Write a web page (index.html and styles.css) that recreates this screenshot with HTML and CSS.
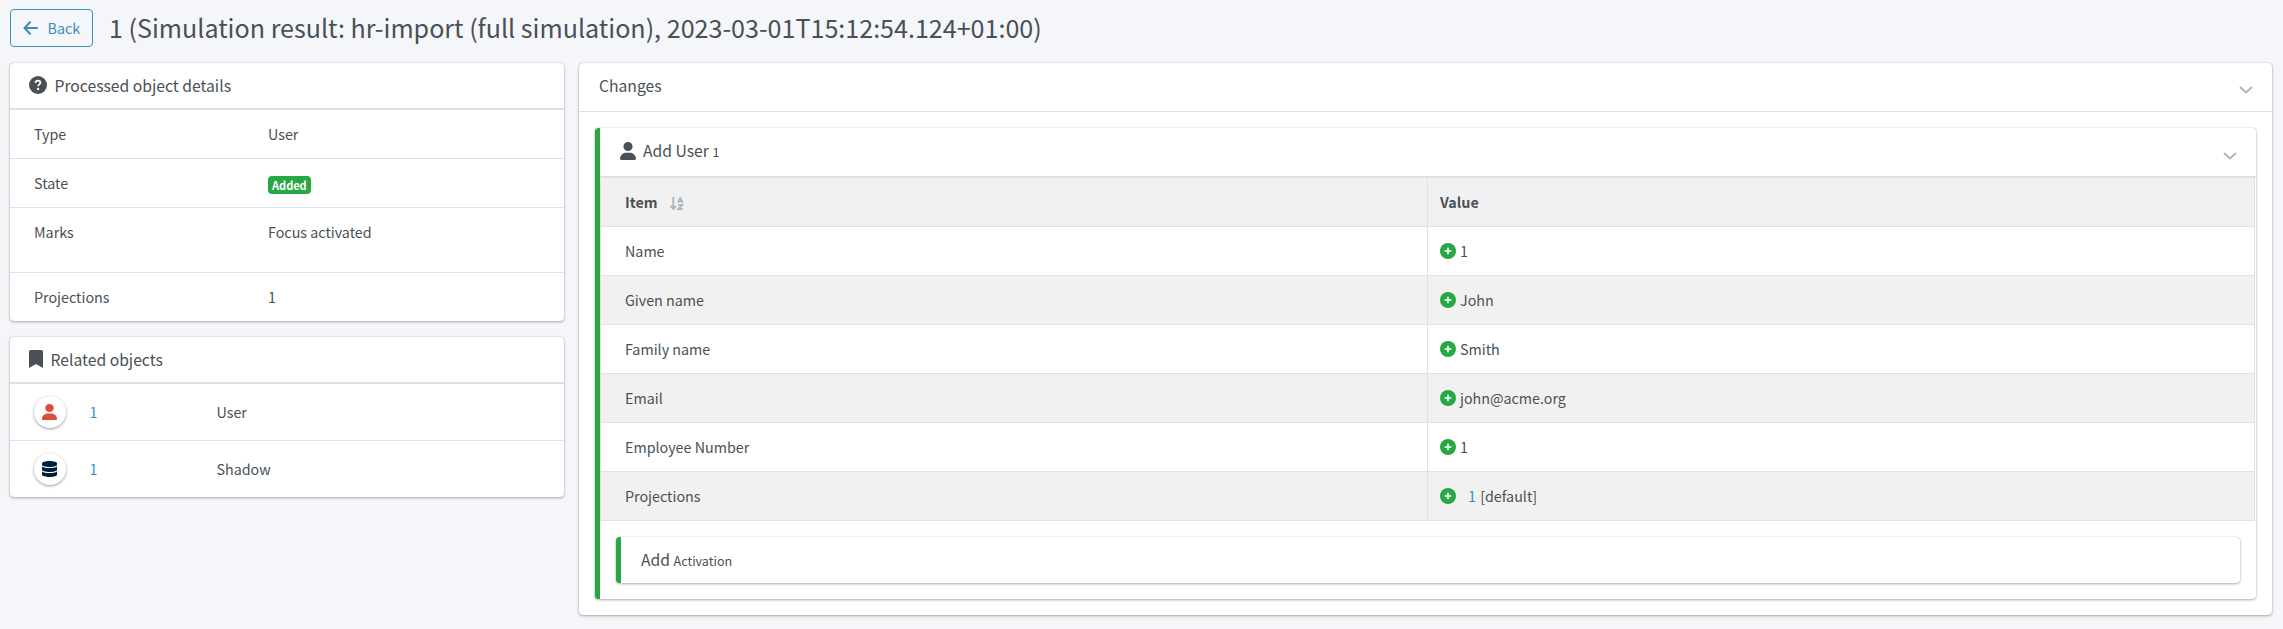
FILE: index.html
```html
<!DOCTYPE html>
<html lang="en">
<head>
<meta charset="utf-8">
<title>Simulation result</title>
<link rel="stylesheet" href="styles.css">
</head>
<body>
<svg class="defs" width="0" height="0">
  <symbol id="user" viewBox="0 0 448 512" preserveAspectRatio="none"><path d="M224 256c70.700 0 128-57.300 128-128S294.700 0 224 0 96 57.300 96 128s57.300 128 128 128zm50 48H174C78 304 0 382 0 478c0 19 15 34 34 34h380c19 0 34-15 34-34 0-96-78-174-174-174z"/></symbol>
  <symbol id="plus" viewBox="0 0 512 512"><circle cx="256" cy="256" r="256"/><path d="M256 166v180M166 256h180" stroke="#fff" stroke-width="50" stroke-linecap="round"/></symbol>
  <symbol id="chevron" viewBox="0 0 14 8"><path d="M1 1l6 5.500L13 1" fill="none" stroke="#adb5bd" stroke-width="2"/></symbol>
</svg>
<header class="page-head">
  <a class="back"><svg width="15" height="14" viewBox="0 0 15 14"><path d="M7 1.200L1.500 7 7 12.800M1.800 7h12.200" fill="none" stroke="currentColor" stroke-width="2" stroke-linecap="round" stroke-linejoin="round"/></svg><span>Back</span></a>
  <h1>1 (Simulation result: hr-import (full simulation), 2023-03-01T15:12:54.124+01:00)</h1>
</header>
<main class="columns">
  <div class="side">
    <section class="card">
      <h3 class="card-head strong"><svg class="i-help" width="18" height="18" viewBox="0 0 18 18"><circle cx="9" cy="9" r="9" fill="#495057"/><path d="M6.500 7C6.700 5.300 7.700 4.700 9 4.700c1.400 0 2.400.8 2.400 2 0 1.700-2.200 1.700-2.200 3.500" fill="none" stroke="#fff" stroke-width="1.800"/><circle cx="9.100" cy="12.900" r="1.200" fill="#fff"/></svg>Processed object details</h3>
      <dl class="details">
        <div><dt>Type</dt><dd>User</dd></div>
        <div><dt>State</dt><dd><span class="badge">Added</span></dd></div>
        <div class="tall"><dt>Marks</dt><dd>Focus activated</dd></div>
        <div><dt>Projections</dt><dd>1</dd></div>
      </dl>
    </section>
    <section class="card">
      <h3 class="card-head strong"><svg class="i-mark" width="14" height="18" viewBox="0 0 14 18"><path d="M0 18V1.700C0 .8.800 0 1.700 0h10.600c.900 0 1.700.8 1.700 1.700V18l-7-4z" fill="#495057"/></svg>Related objects</h3>
      <ul class="related">
        <li><span class="round red"><svg width="15" height="16"><use href="#user"/></svg></span><a>1</a><span>User</span></li>
        <li><span class="round navy"><svg width="15" height="16" viewBox="0 0 448 512" preserveAspectRatio="none"><path d="M448 73v46c0 40-100 73-224 73S0 159 0 119V73C0 33 100 0 224 0s224 33 224 73zM448 176v103c0 40-100 73-224 73S0 319 0 279V176c48 33 136 49 224 49s176-16 224-49zm0 160v103c0 40-100 73-224 73S0 479 0 439V336c48 33 136 49 224 49s176-16 224-49z"/></svg></span><a>1</a><span>Shadow</span></li>
      </ul>
    </section>
  </div>
  <section class="card changes">
    <h3 class="card-head">Changes<svg class="chev" width="14" height="8"><use href="#chevron"/></svg></h3>
    <div class="changes-body">
      <section class="card added">
        <h3 class="card-head strong"><svg class="i-user" width="16" height="18"><use href="#user"/></svg><span>Add User <small>1</small></span><svg class="chev" width="14" height="8"><use href="#chevron"/></svg></h3>
        <table class="delta">
          <thead><tr><th>Item<svg class="sort" width="14" height="13" viewBox="0 0 14 13" fill="none" stroke="#adb5bd"><path d="M3.300 0v11.500M.5 8.800l2.800 3 2.800-3" stroke-width="1.900"/><path d="M8 5.700L10.300.8l2.300 4.900M8.800 4.300h3" stroke-width="1.900"/><path d="M8 7.900h4.300L8.200 12h4.500" stroke-width="1.900"/></svg></th><th>Value</th></tr></thead>
          <tbody>
            <tr><td>Name</td><td><svg class="plus"><use href="#plus"/></svg>1</td></tr>
            <tr><td>Given name</td><td><svg class="plus"><use href="#plus"/></svg>John</td></tr>
            <tr><td>Family name</td><td><svg class="plus"><use href="#plus"/></svg>Smith</td></tr>
            <tr><td>Email</td><td><svg class="plus"><use href="#plus"/></svg>john@acme.org</td></tr>
            <tr><td>Employee Number</td><td><svg class="plus"><use href="#plus"/></svg>1</td></tr>
            <tr><td>Projections</td><td><svg class="plus"><use href="#plus"/></svg><a class="proj">1</a> [default]</td></tr>
          </tbody>
        </table>
        <section class="card activation"><span>Add <small>Activation</small></span></section>
      </section>
    </div>
  </section>
</main>
</body>
</html>
```
FILE: styles.css
```css
* { box-sizing: border-box; }
body {
  margin: 0;
  padding: 9px 11px 0 10px;
  height: 629px;
  overflow: hidden;
  background: #f4f6f9;
  color: #495057;
  font: 14.3px/24px "Noto Sans CJK SC", "Noto Sans", sans-serif;
}
.defs { position: absolute; }
h1, h3, dl, dd, ul { margin: 0; padding: 0; font-weight: 400; }
a { color: #3c8dbc; }
svg { flex: none; }
small { font-size: 80%; }
.page-head { display: flex; height: 38px; align-items: center; }
.back {
  display: flex;
  align-items: center;
  gap: 10px;
  width: 83px;
  height: 38px;
  padding: 0 0 1px 11.500px;
  border: 1px solid #3c8dbc;
  border-radius: 4px;
}
h1 { margin-left: 16px; font-size: 25.080px; line-height: 36px; height: 38px; white-space: nowrap; }
.columns { display: flex; gap: 15px; margin-top: 16px; align-items: flex-start; }
.side { display: flex; flex-direction: column; gap: 16px; width: 554px; }
.card {
  background: #fff;
  border-radius: 4px;
  box-shadow: 0 0 1px rgba(0,0,0,.3), 0 1px 3px rgba(0,0,0,.3);
}
.card-head {
  display: flex;
  align-items: center;
  height: 49px;
  padding: 0 19px 2px 20px;
  border-bottom: 1px solid #dee0e2;
  font-size: 15.700px;
}
.card-head.strong { height: 47px; padding: 0 19px 0 19px; border-bottom: 2px solid #dee0e2; }
.i-help, .i-mark, .i-user { margin-right: 7.500px; fill: #495057; }
.i-help, .i-mark { margin-top: -1px; }
.i-user { margin: -2px 7px 0 1px; }
.chev { margin: 8px 0 0 auto; }
.details > div { display: flex; height: 49px; padding: 12px 24px 0; border-bottom: 1px solid #dee2e6; }
.details > div.tall { height: 65px; }
.details > div:last-child { height: 48px; border: 0; }
dt { width: 234px; }
.badge {
  display: block;
  height: 18px;
  margin-top: 5px;
  padding: 0 4px;
  border-radius: 4px;
  background: #28a745;
  color: #fff;
  font-size: 11px;
  font-weight: 700;
  line-height: 18px;
}
.related { list-style: none; }
.related li { display: grid; grid-template-columns: 55.500px 127px auto; align-items: center; height: 57px; padding-left: 24px; border-bottom: 1px solid #dee2e6; }
.related li:last-child { height: 56px; border: 0; }
.round { display: flex; align-items: center; justify-content: center; width: 32px; height: 32px; padding-right: 1px; border-radius: 50%; box-shadow: 0 1px 3px rgba(0,0,0,.4); }
.red { fill: #dd4b39; }
.navy { fill: #001f3f; }
.changes { flex: 1; }
.changes-body { padding: 16px; }
.added { border-left: 5px solid #28a745; padding-bottom: 16px; }
.added > .card-head.strong { height: 50px; padding-bottom: 1px; }
.delta { width: 1655px; border-collapse: collapse; table-layout: fixed; border: 1px solid #dee2e6; border-top: 0; }
.delta th, .delta td { height: 49px; padding: 0 12px; border: 1px solid #dee2e6; border-top: 0; text-align: left; }
.delta th { height: 48px; }
.delta th:first-child, .delta td:first-child { padding-left: 24px; width: 827px; }
.delta tr { background: #fff; }
.delta thead tr, .delta tbody tr:nth-child(even) { background: #f1f1f1; }
.sort { margin-left: 12px; vertical-align: -2px; }
.plus { width: 16px; height: 16px; margin-right: 4px; fill: #28a745; vertical-align: -2px; }
.proj { margin: 0 1px 0 8px; }
.activation { display: flex; align-items: center; height: 46px; margin: 16px 16px 0; padding: 2px 0 0 20px; border-left: 5px solid #28a745; font-size: 15.700px; }
```
